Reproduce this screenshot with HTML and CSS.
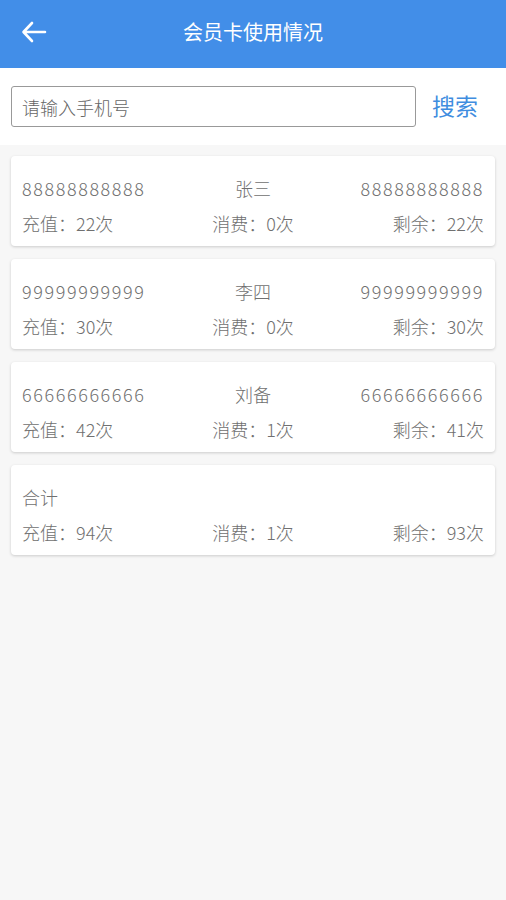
FILE: index.html
```html
<!DOCTYPE html>
<html lang="zh-CN">
<head>
  <meta charset="UTF-8">
  <meta name="viewport" content="width=device-width, initial-scale=1.0">
  <title>会员卡使用情况</title>
  <link rel="stylesheet" href="styles.css">
</head>
<body>
  <header class="topbar">
    <span class="back">
      <svg width="26" height="22" viewBox="0 0 26 22">
        <path d="M24 11H3M11 2L2.5 11L11 20" fill="none" stroke="#fff" stroke-width="2.6" stroke-linecap="round" stroke-linejoin="round"/>
      </svg>
    </span>
    <h1>会员卡使用情况</h1>
  </header>

  <div class="search">
    <input class="search-input" type="text" placeholder="请输入手机号">
    <span class="search-btn">搜索</span>
  </div>

  <div class="list">
    <div class="card">
      <div class="row">
        <span class="num">88888888888</span>
        <span class="mid">张三</span>
        <span class="num right">88888888888</span>
      </div>
      <div class="row">
        <span>充值：22次</span>
        <span class="mid">消费：0次</span>
        <span class="right">剩余：22次</span>
      </div>
    </div>

    <div class="card">
      <div class="row">
        <span class="num">99999999999</span>
        <span class="mid">李四</span>
        <span class="num right">99999999999</span>
      </div>
      <div class="row">
        <span>充值：30次</span>
        <span class="mid">消费：0次</span>
        <span class="right">剩余：30次</span>
      </div>
    </div>

    <div class="card">
      <div class="row">
        <span class="num">66666666666</span>
        <span class="mid">刘备</span>
        <span class="num right">66666666666</span>
      </div>
      <div class="row">
        <span>充值：42次</span>
        <span class="mid">消费：1次</span>
        <span class="right">剩余：41次</span>
      </div>
    </div>

    <div class="card">
      <div class="row">
        <span>合计</span>
      </div>
      <div class="row">
        <span>充值：94次</span>
        <span class="mid">消费：1次</span>
        <span class="right">剩余：93次</span>
      </div>
    </div>
  </div>
</body>
</html>
```

FILE: styles.css
```css
* {
  margin: 0;
  padding: 0;
  box-sizing: border-box;
}

body {
  font-family: "Noto Sans CJK SC", "Noto Sans", sans-serif;
  background: #f7f7f7;
  color: #707070;
  min-height: 100vh;
}

.topbar {
  height: 68px;
  background: #428ee8;
  display: flex;
  align-items: center;
  justify-content: center;
  position: relative;
}

.topbar h1 {
  font-size: 20px;
  font-weight: normal;
  color: #fff;
  margin-top: -5px;
}

.back {
  position: absolute;
  left: 21px;
  top: 21px;
  display: flex;
}

.search {
  background: #fff;
  display: flex;
  align-items: center;
  padding: 18px 0 18px 11px;
}

.search-input {
  width: 405px;
  height: 41px;
  border: 1px solid #999;
  border-radius: 3px;
  padding: 0 10px;
  font-family: inherit;
  font-size: 18px;
  font-weight: 300;
  color: #333;
  outline: none;
}

.search-input::placeholder {
  color: #666;
}

.search-btn {
  margin-left: 16px;
  margin-top: -3px;
  font-size: 23px;
  color: #3f8ddf;
}

.list {
  padding: 11px;
  display: flex;
  flex-direction: column;
  gap: 13px;
}

.card {
  background: #fff;
  border-radius: 4px;
  box-shadow: 0 1px 3px rgba(0, 0, 0, 0.18);
  padding: 19px 11px 10px;
  display: flex;
  flex-direction: column;
  gap: 9px;
}

.row {
  display: grid;
  grid-template-columns: 1fr 1fr 1fr;
  align-items: center;
  font-size: 18px;
  font-weight: 300;
  line-height: 26px;
}

.num {
  letter-spacing: 1.6px;
}

.mid {
  text-align: center;
}

.right {
  text-align: right;
}
```
